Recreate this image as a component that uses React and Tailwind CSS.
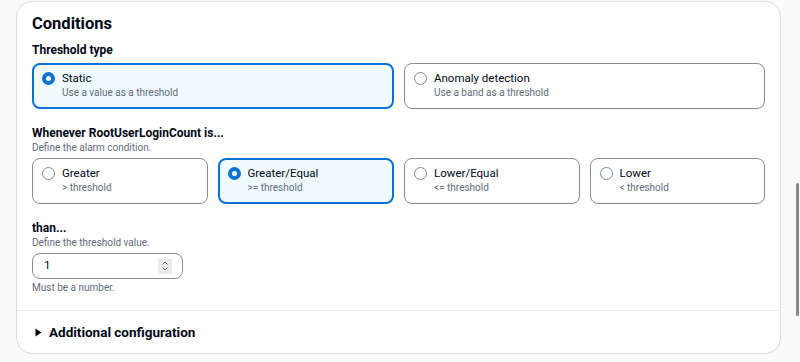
import React, { useState } from 'react';

const font = { fontFamily: 'Roboto, "Open Sans", Arial, sans-serif' };

const Radio = ({ checked }) => (
  checked ? (
    <span className="block w-[13px] h-[13px] rounded-full border-[4px] border-[#0972d3] bg-white shrink-0" />
  ) : (
    <span className="block w-[13px] h-[13px] rounded-full border border-[#7d8998] bg-white shrink-0" />
  )
);

const Tile = ({ label, desc, checked, onClick }) => (
  <div
    onClick={onClick}
    className={
      checked
        ? 'flex-1 h-[46px] rounded-[8px] border-2 border-[#0972d3] bg-[#f0fbff] pl-[8px] pt-[5px] cursor-pointer'
        : 'flex-1 h-[46px] rounded-[8px] border border-[#8c8c94] bg-white pl-[9px] pt-[6px] cursor-pointer'
    }
  >
    <div className="flex items-start gap-[7px]">
      <div className="pt-[2px]">
        <Radio checked={checked} />
      </div>
      <div>
        <div className="text-[11.5px] leading-[16px] text-[#000716]">{label}</div>
        <div className="text-[10px] leading-[13px] text-[#5f6b7a]">{desc}</div>
      </div>
    </div>
  </div>
);

export default function App() {
  const [type, setType] = useState('static');
  const [cond, setCond] = useState('ge');

  const conditions = [
    { id: 'gt', label: 'Greater', desc: '> threshold' },
    { id: 'ge', label: 'Greater/Equal', desc: '>= threshold' },
    { id: 'le', label: 'Lower/Equal', desc: '<= threshold' },
    { id: 'lt', label: 'Lower', desc: '< threshold' },
  ];

  return (
    <div className="w-[800px] h-[362px] bg-[#fafafa] flex overflow-hidden" style={font}>
      <div className="w-[765px] ml-[16px] mt-[1px] h-[353px] bg-white border border-[#dcdcdf] rounded-[16px] flex flex-col">
        <div className="pl-[15px] pr-[15px] pt-[11px]">
          <h2 className="text-[16.5px] leading-[22px] font-bold text-[#000716]">Conditions</h2>

          <div className="mt-[7px] text-[12px] leading-[16px] font-bold text-[#000716]">Threshold type</div>
          <div className="mt-[5px] flex gap-[10px]">
            <Tile label="Static" desc="Use a value as a threshold" checked={type === 'static'} onClick={() => setType('static')} />
            <Tile label="Anomaly detection" desc="Use a band as a threshold" checked={type === 'anomaly'} onClick={() => setType('anomaly')} />
          </div>

          <div className="mt-[16px] text-[12px] leading-[16px] font-bold text-[#000716]">Whenever RootUserLoginCount is...</div>
          <div className="text-[10px] leading-[14px] text-[#5f6b7a]">Define the alarm condition.</div>
          <div className="mt-[3px] flex gap-[10px]">
            {conditions.map((c) => (
              <Tile key={c.id} label={c.label} desc={c.desc} checked={cond === c.id} onClick={() => setCond(c.id)} />
            ))}
          </div>

          <div className="mt-[16px] text-[12px] leading-[16px] font-bold text-[#000716]">than...</div>
          <div className="text-[10px] leading-[14px] text-[#5f6b7a]">Define the threshold value.</div>
          <div className="mt-[3px] w-[151px] h-[26px] rounded-[8px] border border-[#8c8c94] flex items-center justify-between pl-[11px] pr-[10px]">
            <span className="text-[11.5px] text-[#000716]">1</span>
            <span className="w-[14px] h-[15px] bg-[#e9ebed] flex items-center justify-center">
              <svg width="8" height="12" viewBox="0 0 8 12" fill="none" stroke="#5f6b7a" strokeWidth="1">
                <path d="M1.5 4.5 L4 2 L6.5 4.5" />
                <path d="M1.5 7.5 L4 10 L6.5 7.5" />
              </svg>
            </span>
          </div>
          <div className="mt-[2px] text-[10px] leading-[14px] text-[#5f6b7a]">Must be a number.</div>
        </div>

        <div className="mt-[15px] border-t border-[#e9ebed] flex-1 pl-[18px] flex items-center gap-[7px]">
          <svg width="7" height="9" viewBox="0 0 7 9">
            <path d="M0.5 0.5 L6.5 4.5 L0.5 8.5 Z" fill="#000716" />
          </svg>
          <span className="text-[13.5px] font-bold text-[#000716]">Additional configuration</span>
        </div>
      </div>
      <div className="ml-[15px] mt-[183px] w-[3px] h-[133px] bg-[#8a8a8a] rounded-full" />
    </div>
  );
}
